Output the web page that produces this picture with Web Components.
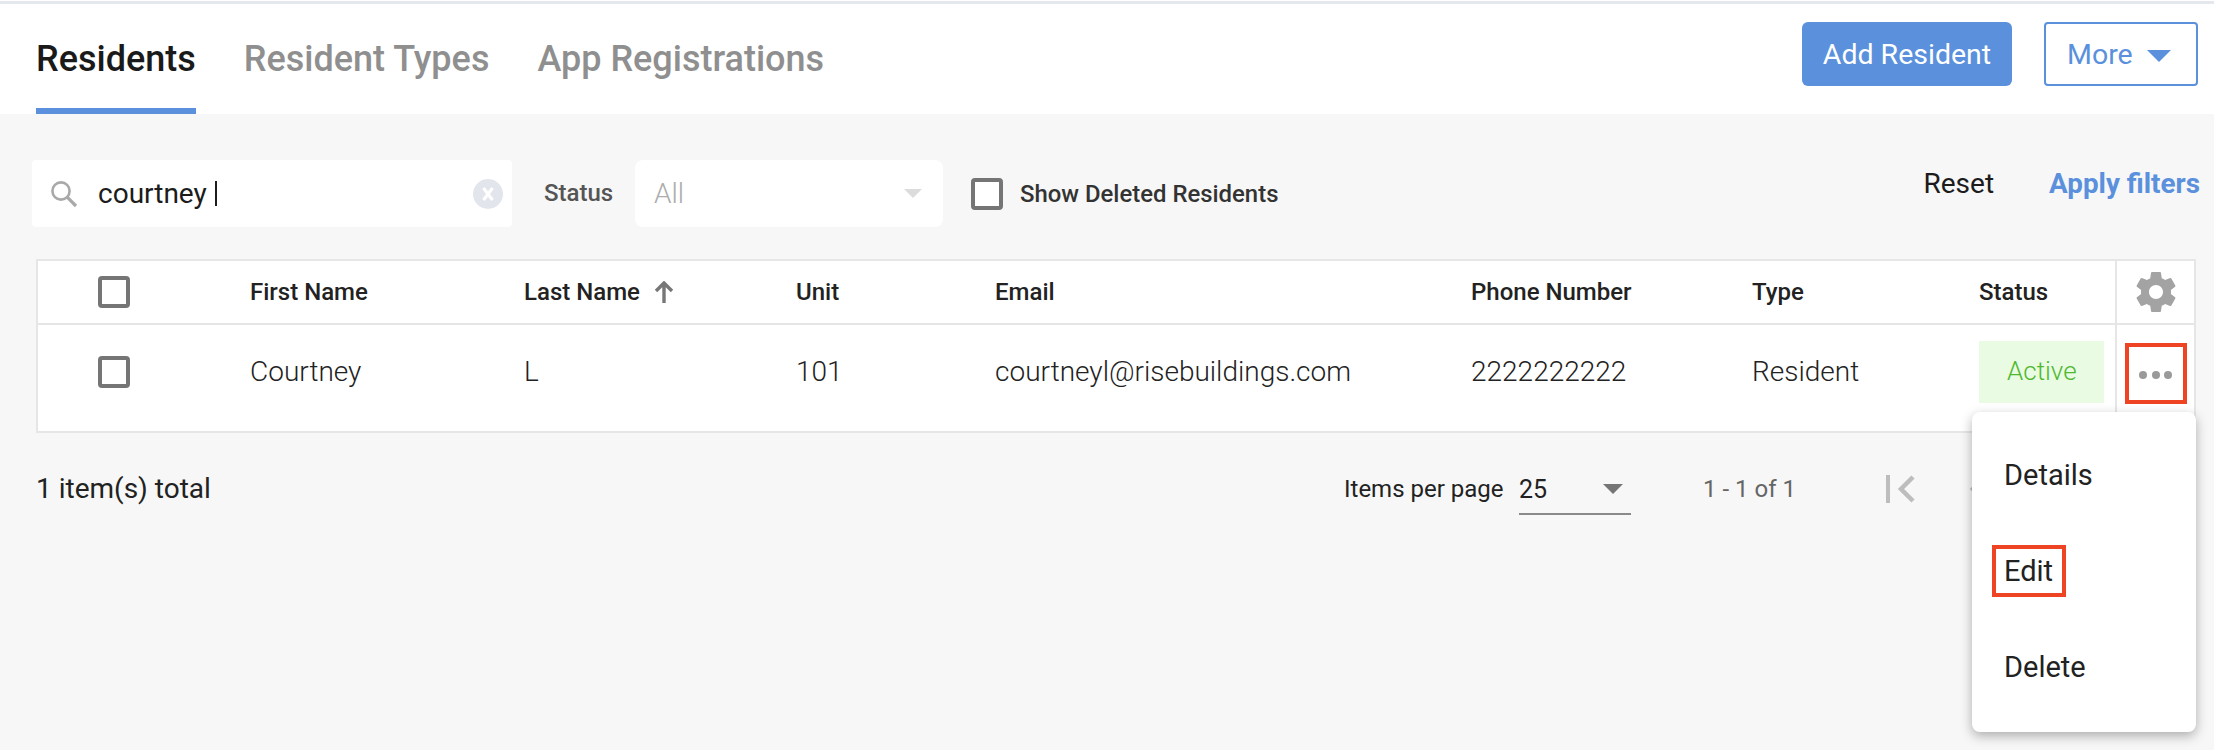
<!DOCTYPE html>
<html>
<head>
<meta charset="utf-8">
<title>Residents</title>
<style>
  html, body { margin: 0; height: 100%; }
  body {
    background: #f7f7f7;
    color: #1c1c1c;
    font-family: Roboto, "Liberation Sans", sans-serif;
    overflow: hidden;
  }
</style>
</head>
<body>
<page-header>
  <app-tab active>Residents</app-tab>
  <app-tab>Resident Types</app-tab>
  <app-tab>App Registrations</app-tab>
  <app-button slot="actions" kind="solid">Add Resident</app-button>
  <app-button slot="actions" kind="outline" caret>More</app-button>
</page-header>
<filter-bar></filter-bar>
<resident-table></resident-table>
<table-footer></table-footer>

<script>
class pageHeader extends HTMLElement {
  constructor(){
    super();
    this.attachShadow({mode:'open'});
    this.shadowRoot.innerHTML = `
      <style>
        :host{
          display:flex;
          justify-content:space-between;
          height:113px;
          box-sizing:border-box;
          margin-top:1px;
          border-top:3px solid #e4e7ed;
          box-shadow:0 -1px 0 #fff;
          background:#fff;
          padding:0 16px 0 36px;
        }
        .tabs{ display:flex; gap:48px; }
        .actions{ display:flex; gap:32px; padding-top:18px; }
      </style>
      <div class="tabs"><slot></slot></div>
      <div class="actions"><slot name="actions"></slot></div>
    `;
  }
}
customElements.define('page-header', pageHeader);

class appTab extends HTMLElement {
  constructor(){
    super();
    this.attachShadow({mode:'open'});
    this.shadowRoot.innerHTML = `
      <style>
        :host{
          display:block;
          box-sizing:border-box;
          height:110px;
          padding-top:35px;
          font-size:36px;
          line-height:40px;
          font-weight:500;
          color:#8f8f8f;
          border-bottom:6px solid transparent;
        }
        :host([active]){
          color:#1a1a1a;
          border-bottom-color:#5a90dc;
        }
      </style>
      <slot></slot>
    `;
  }
}
customElements.define('app-tab', appTab);

class appButton extends HTMLElement {
  constructor(){
    super();
    this.attachShadow({mode:'open'});
    this.shadowRoot.innerHTML = `
      <style>
        :host{
          display:flex;
          align-items:center;
          box-sizing:border-box;
          height:64px;
          font-size:28.5px;
          border-radius:6px;
        }
        :host([kind="solid"]){
          width:210px;
          justify-content:center;
          background:#5a90dc;
          color:#fff;
        }
        :host([kind="outline"]){
          width:154px;
          padding-left:21px;
          gap:14px;
          background:#fff;
          color:#5a90dc;
          border:2px solid #5a90dc;
          border-radius:4px;
        }
        .caret{ display:none; width:24px; height:12px; }
        :host([caret]) .caret{ display:block; margin-top:3px; }
      </style>
      <slot></slot>
      <svg class="caret" viewBox="0 0 24 12"><path d="M0 0h24L12 12z" fill="#5a90dc"/></svg>
    `;
  }
}
customElements.define('app-button', appButton);

class filterBar extends HTMLElement {
  constructor(){
    super();
    this.attachShadow({mode:'open'});
    this.shadowRoot.innerHTML = `
      <style>
        :host{
          display:flex;
          align-items:flex-start;
          height:145px;
          box-sizing:border-box;
          padding:46px 14px 0 32px;
        }
        .search, .select{
          display:flex;
          align-items:center;
          box-sizing:border-box;
          height:67px;
          background:#fff;
          font-size:28px;
        }
        .search{ width:480px; border-radius:4px; padding:0 9px 0 18px; }
        .search .icon{ width:28px; height:28px; flex:none; }
        .search .value{ margin-left:20px; flex:1; color:#1c1c1c; display:flex; align-items:center; white-space:pre; }
        .cursor{ display:inline-block; width:2px; height:25px; background:#1c1c1c; margin-left:1px; }
        .search .clear{ width:30px; height:30px; flex:none; }
        .label{ margin:0 22px 0 32px; width:69px; font-size:24px; font-weight:500; color:#555; line-height:67px; }
        .select{ width:308px; border-radius:8px; padding:0 21px 0 19px; justify-content:space-between; color:#adadad; font-size:28px; font-weight:300; }
        .select svg{ width:18px; height:9px; }
        .check{ display:flex; align-items:center; height:67px; margin-left:28px; gap:17px; font-size:23.9px; font-weight:500; color:#333; }
        .box{ width:32px; height:32px; box-sizing:border-box; border:4px solid #757575; border-radius:4px; background:#fff; }
        .links{ margin-left:auto; display:flex; gap:55px; font-size:28px; line-height:32px; margin-top:8px; }
        .apply{ color:#5a90dc; font-weight:700; font-size:27.8px; }
      </style>
      <div class="search">
        <svg class="icon" viewBox="0 0 28 28" fill="none" stroke="#a9a9a9" stroke-width="2.6">
          <circle cx="11" cy="11" r="8.6"/><path d="M17.4 17.4L26 26" stroke-width="3.2"/>
        </svg>
        <span class="value">courtney <i class="cursor"></i></span>
        <svg class="clear" viewBox="0 0 30 30">
          <circle cx="15" cy="15" r="15" fill="#e2e6ec"/>
          <path d="M10.5 9l9 12M19.5 9l-9 12" stroke="#fff" stroke-width="3" fill="none"/>
        </svg>
      </div>
      <span class="label">Status</span>
      <div class="select">
        <span>All</span>
        <svg viewBox="0 0 18 9"><path d="M0 0h18L9 9z" fill="#dcdcdc"/></svg>
      </div>
      <div class="check"><span class="box"></span><span>Show Deleted Residents</span></div>
      <div class="links"><span>Reset</span><span class="apply">Apply filters</span></div>
    `;
  }
}
customElements.define('filter-bar', filterBar);

class residentTable extends HTMLElement {
  constructor(){
    super();
    this.attachShadow({mode:'open'});
    const heads = ['First Name','Last Name','Unit','Email','Phone Number','Type','Status'];
    const cells = ['Courtney','L','101','courtneyl@risebuildings.com','2222222222','Resident'];
    this.shadowRoot.innerHTML = `
      <style>
        :host{
          display:block;
          margin:0 18px 0 36px;
          box-sizing:border-box;
          height:174px;
          background:#fff;
          border:2px solid #e6e6e6;
          position:relative;
        }
        .row{
          display:grid;
          grid-template-columns:212px 274px 272px 199px 476px 281px 227px 136px 1fr;
        }
        .head{ height:64px; border-bottom:2px solid #e6e6e6; box-sizing:border-box; font-size:24px; font-weight:500; color:#222; }
        .body{ height:106px; font-size:28px; font-weight:300; color:#222; }
        .cell{ display:flex; align-items:center; height:62px; box-sizing:border-box; }
        .body .cell{ margin-top:16px; padding-bottom:2px; }
        .body .tick, .body .status{ padding-bottom:0; }
        .tick{ justify-content:flex-start; padding-left:60px; }
        .box{ width:32px; height:32px; box-sizing:border-box; border:4px solid #757575; border-radius:4px; }
        .sort{ width:20px; height:22px; margin-left:14px; }
        .badge{ width:125px; box-sizing:border-box; height:62px; padding:0 0 2px 28px; background:#e9fbe3; color:#4fb82f; display:flex; align-items:center; font-size:26px; }
        .tool{ border-left:2px solid #e6e6e6; height:auto; align-self:stretch; justify-content:center; }
        .body .tool{ margin-top:0; padding-bottom:0; align-items:flex-start; padding-top:18px; }
        .gear{ width:40px; height:40px; }
        .more{ width:62px; height:61px; box-sizing:border-box; border:4px solid #ee4423; display:flex; align-items:center; justify-content:center; gap:4.5px; }
        .more i{ width:8px; height:8px; border-radius:50%; background:#9a9a9a; margin-top:3px; }
      </style>
      <div class="row head">
        <div class="cell tick"><span class="box"></span></div>
        ${heads.map((h, i) => `<div class="cell">${h}${i === 1 ? `
          <svg class="sort" viewBox="0 0 20 22" fill="none" stroke="#777" stroke-width="3.4"><path d="M10 22V3M2 10l8-8 8 8"/></svg>` : ''}</div>`).join('')}
        <div class="cell tool">
          <svg class="gear" viewBox="2 2 20 20"><path fill="#a3a3a3" d="M19.43 12.98c.04-.32.07-.64.07-.98s-.03-.66-.07-.98l2.11-1.65c.19-.15.24-.42.12-.64l-2-3.46c-.12-.22-.39-.3-.61-.22l-2.49 1c-.52-.4-1.08-.73-1.69-.98l-.38-2.65C14.46 2.18 14.25 2 14 2h-4c-.25 0-.46.18-.49.42l-.38 2.65c-.61.25-1.17.59-1.69.98l-2.49-1c-.23-.09-.49 0-.61.22l-2 3.46c-.13.22-.07.49.12.64l2.11 1.65c-.04.32-.07.65-.07.98s.03.66.07.98l-2.11 1.65c-.19.15-.24.42-.12.64l2 3.46c.12.22.39.3.61.22l2.49-1c.52.4 1.08.73 1.69.98l.38 2.65c.03.24.24.42.49.42h4c.25 0 .46-.18.49-.42l.38-2.65c.61-.25 1.17-.59 1.69-.98l2.49 1c.23.09.49 0 .61-.22l2-3.46c.12-.22.07-.49-.12-.64l-2.11-1.65zM12 15.5c-1.93 0-3.5-1.57-3.5-3.5s1.57-3.5 3.5-3.5 3.5 1.57 3.5 3.5-1.57 3.5-3.5 3.5z"/></svg>
        </div>
      </div>
      <div class="row body">
        <div class="cell tick"><span class="box"></span></div>
        ${cells.map(c => `<div class="cell">${c}</div>`).join('')}
        <div class="cell status"><span class="badge">Active</span></div>
        <div class="cell tool"><div class="more"><i></i><i></i><i></i></div></div>
      </div>
    `;
  }
}
customElements.define('resident-table', residentTable);

class tableFooter extends HTMLElement {
  constructor(){
    super();
    this.attachShadow({mode:'open'});
    this.shadowRoot.innerHTML = `
      <style>
        :host{
          display:flex;
          align-items:center;
          position:relative;
          box-sizing:border-box;
          height:112px;
          padding:0 0 0 36px;
          font-size:28px;
          font-weight:300;
          color:#222;
        }
        .total{ flex:none; width:1308px; font-weight:400; margin-top:-2px; }
        .perpage{ font-size:24px; font-weight:400; width:175px; }
        .size{ display:flex; justify-content:space-between; align-items:center; width:112px; box-sizing:border-box; height:50px; padding:0 8px 0 0; border-bottom:2px solid #8a8a8a; font-size:25px; font-weight:400; margin-top:2px; }
        .size svg{ width:20px; height:10px; }
        .range{ margin-left:72px; width:183px; font-size:24px; color:#666; font-weight:400; }
        .first{ width:29px; height:28px; }
        .next{ width:20px; height:28px; margin-left:54px; }
        .menu{
          position:absolute;
          left:1972px;
          top:-21px;
          width:224px;
          height:320px;
          background:#fff;
          border-radius:8px;
          box-shadow:0 4px 12px rgba(0,0,0,.3);
          font-size:29px;
          font-weight:400;
          color:#222;
          display:flex;
          flex-direction:column;
          justify-content:space-between;
          padding:45px 0 47px 32px;
          box-sizing:border-box;
        }
        .menu span{ line-height:36px; position:relative; display:block; }
        .menu .marked::after{
          content:"";
          position:absolute;
          left:-12px;
          top:-8px;
          width:74px;
          height:52px;
          box-sizing:border-box;
          border:4px solid #ee4423;
        }
      </style>
      <span class="total">1 item(s) total</span>
      <span class="perpage">Items per page</span>
      <div class="size"><span>25</span><svg viewBox="0 0 20 10"><path d="M0 0h20L10 10z" fill="#757575"/></svg></div>
      <span class="range">1 - 1 of 1</span>
      <svg class="first" viewBox="0 0 29 28" fill="none" stroke="#bdbdbd"><path d="M2 0v28" stroke-width="4"/><path d="M27 2L15 14l12 12" stroke-width="4.5"/></svg>
      <svg class="next" viewBox="0 0 20 28" fill="none" stroke="#bdbdbd" stroke-width="4.5"><path d="M16 2L4 14l12 12"/></svg>
      <div class="menu">
        <span>Details</span>
        <span class="marked">Edit</span>
        <span>Delete</span>
      </div>
    `;
  }
}
customElements.define('table-footer', tableFooter);
</script>
</body>
</html>
